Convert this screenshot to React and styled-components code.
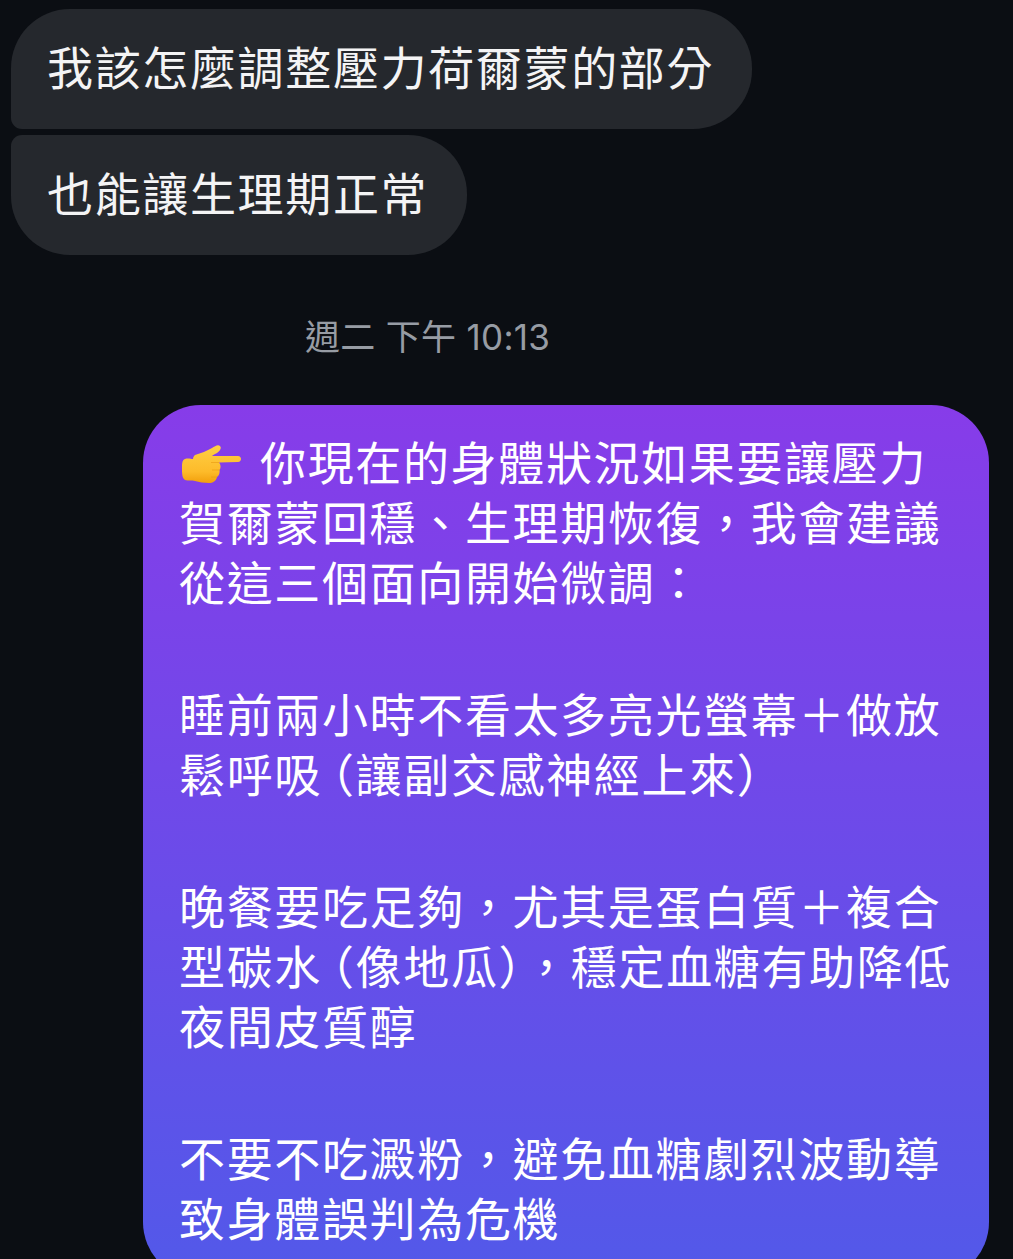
import React from 'react';
import styled, { createGlobalStyle } from 'styled-components';

const GlobalStyle = createGlobalStyle`
  html, body {
    margin: 0;
    padding: 0;
    height: 100%;
    background: #0b0e13;
  }
`;

const Page = styled.main`
  width: 1013px;
  height: 1259px;
  overflow: hidden;
  box-sizing: border-box;
  padding-top: 9px;
  background: #0b0e13;
  color: #fff;
  font-family: "Noto Sans CJK TC", "Noto Sans", sans-serif;
  font-size: 46px;
  line-height: 60px;
  letter-spacing: 1.65px;
`;

const IncomingGroup = styled.section`
  display: flex;
  flex-direction: column;
  align-items: flex-start;
  gap: 6px;
  padding-left: 11px;
`;

const IncomingBubble = styled.div`
  height: 120px;
  box-sizing: border-box;
  padding: 26px 38.3px 0 36px;
  background: #25282d;
  color: #f4f4f5;
  border-radius: ${(p) => (p.$first ? '59px 59px 59px 11px' : '11px 59px 59px 59px')};
`;

const Timestamp = styled.time`
  display: block;
  margin: 62px 0 48px 305px;
  height: 40px;
  font-family: Inter, "Noto Sans CJK TC", sans-serif;
  font-size: 35px;
  line-height: 40px;
  letter-spacing: 0.3px;
  color: #979ca4;
  white-space: pre;
`;

const OutgoingBubble = styled.div`
  width: 846px;
  height: 875px;
  margin-left: 143px;
  box-sizing: border-box;
  padding: 25px 38px 0 36px;
  border-radius: 58px;
  background: linear-gradient(180deg, #873ce9 0%, #5259e9 100%);
`;

const Paragraph = styled.p`
  margin: 0 0 72px;
  white-space: nowrap;
`;

/* the reference's opening paren is narrower than a full em */
const OpenParen = styled.span`
  font-feature-settings: "halt";
  margin-left: 9px;
`;

const HandIcon = styled.svg`
  display: inline-block;
  width: 60px;
  height: 38px;
  margin: 0 18px 0 3px;
  vertical-align: -3px;
`;

const PointingHand = () => (
  <HandIcon viewBox="0 0 60 38" aria-hidden="true">
    <defs>
      <linearGradient id="hand" x1="0" y1="0" x2="0" y2="1">
        <stop offset="0" stopColor="#ffcf45" />
        <stop offset="0.7" stopColor="#fdbb2a" />
        <stop offset="1" stopColor="#f29f0c" />
      </linearGradient>
    </defs>
    <path
      fill="url(#hand)"
      d="M13 10C19 8 25 6 30 3C33 1 36 -1 38 1C40 3 38 6 35 8C33 9 31 10 30 11L56 11C60 11 60 17 56 17L37 17.5C39 20 39 23 37.5 25C38 28 37 31 35 32C34 36 31 38 27 38C22 38 17 37 13 36C10 35 6 36 3 35C0 33 0 28 0 23C0 19 0 15 3 14C6 13 9 14 11 14C11 12 12 11 13 10Z"
    />
    <path fill="none" stroke="#e89a10" strokeOpacity="0.6" strokeWidth="1" d="M29 17.5L37 17.5M30 25L37.5 25M29 32L35 32" />
  </HandIcon>
);

export default function App() {
  return (
    <Page>
      <GlobalStyle />
      <IncomingGroup>
        <IncomingBubble $first>我該怎麼調整壓力荷爾蒙的部分</IncomingBubble>
        <IncomingBubble>也能讓生理期正常</IncomingBubble>
      </IncomingGroup>
      <Timestamp>週二 下午 10:13</Timestamp>
      <OutgoingBubble>
        <Paragraph>
          <PointingHand />
          你現在的身體狀況如果要讓壓力
          <br />
          賀爾蒙回穩、生理期恢復，我會建議
          <br />
          從這三個面向開始微調：
        </Paragraph>
        <Paragraph>
          睡前兩小時不看太多亮光螢幕＋做放
          <br />
          鬆呼吸<OpenParen>（</OpenParen>讓副交感神經上來）
        </Paragraph>
        <Paragraph>
          晚餐要吃足夠，尤其是蛋白質＋複合
          <br />
          型碳水<OpenParen>（</OpenParen>像地瓜），穩定血糖有助降低
          <br />
          夜間皮質醇
        </Paragraph>
        <Paragraph>
          不要不吃澱粉，避免血糖劇烈波動導
          <br />
          致身體誤判為危機
        </Paragraph>
      </OutgoingBubble>
    </Page>
  );
}
